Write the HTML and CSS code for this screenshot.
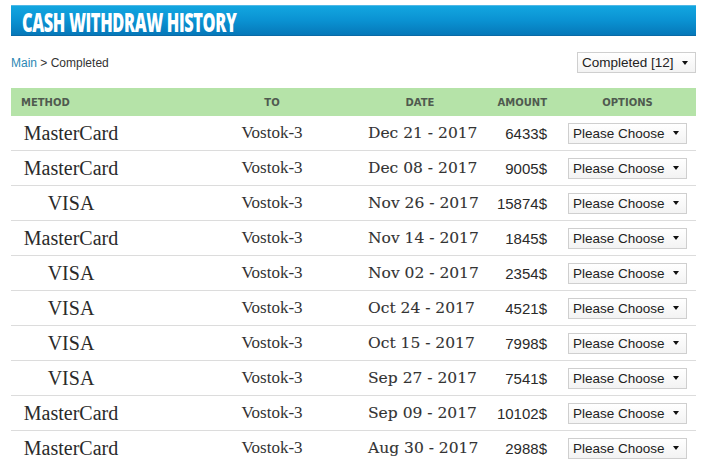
FILE: index.html
```html
<!DOCTYPE html>
<html>
<head>
<meta charset="utf-8">
<link rel="stylesheet" href="styles.css">
</head>
<body>
<div class="page">
  <div class="titlebar"><h1 class="title">CASH WITHDRAW HISTORY</h1></div>
  <div class="toolbar">
    <div class="crumbs"><a class="crumb-link">Main</a> &gt; Completed</div>
    <div class="select select-filter"><span>Completed [12]</span><i class="caret"></i></div>
  </div>
  <div class="table">
    <div class="row head">
      <div class="c-method">METHOD</div>
      <div class="c-to">TO</div>
      <div class="c-date">DATE</div>
      <div class="c-amount">AMOUNT</div>
      <div class="c-options"><span class="opt-label">OPTIONS</span></div>
    </div>
    <div class="row"><div class="c-method">MasterCard</div><div class="c-to">Vostok-3</div><div class="c-date">Dec 21 - 2017</div><div class="c-amount">6433$</div><div class="c-options"><div class="select"><span>Please Choose</span><i class="caret"></i></div></div></div>
    <div class="row"><div class="c-method">MasterCard</div><div class="c-to">Vostok-3</div><div class="c-date">Dec 08 - 2017</div><div class="c-amount">9005$</div><div class="c-options"><div class="select"><span>Please Choose</span><i class="caret"></i></div></div></div>
    <div class="row"><div class="c-method">VISA</div><div class="c-to">Vostok-3</div><div class="c-date">Nov 26 - 2017</div><div class="c-amount">15874$</div><div class="c-options"><div class="select"><span>Please Choose</span><i class="caret"></i></div></div></div>
    <div class="row"><div class="c-method">MasterCard</div><div class="c-to">Vostok-3</div><div class="c-date">Nov 14 - 2017</div><div class="c-amount">1845$</div><div class="c-options"><div class="select"><span>Please Choose</span><i class="caret"></i></div></div></div>
    <div class="row"><div class="c-method">VISA</div><div class="c-to">Vostok-3</div><div class="c-date">Nov 02 - 2017</div><div class="c-amount">2354$</div><div class="c-options"><div class="select"><span>Please Choose</span><i class="caret"></i></div></div></div>
    <div class="row"><div class="c-method">VISA</div><div class="c-to">Vostok-3</div><div class="c-date">Oct 24 - 2017</div><div class="c-amount">4521$</div><div class="c-options"><div class="select"><span>Please Choose</span><i class="caret"></i></div></div></div>
    <div class="row"><div class="c-method">VISA</div><div class="c-to">Vostok-3</div><div class="c-date">Oct 15 - 2017</div><div class="c-amount">7998$</div><div class="c-options"><div class="select"><span>Please Choose</span><i class="caret"></i></div></div></div>
    <div class="row"><div class="c-method">VISA</div><div class="c-to">Vostok-3</div><div class="c-date">Sep 27 - 2017</div><div class="c-amount">7541$</div><div class="c-options"><div class="select"><span>Please Choose</span><i class="caret"></i></div></div></div>
    <div class="row"><div class="c-method">MasterCard</div><div class="c-to">Vostok-3</div><div class="c-date">Sep 09 - 2017</div><div class="c-amount">10102$</div><div class="c-options"><div class="select"><span>Please Choose</span><i class="caret"></i></div></div></div>
    <div class="row"><div class="c-method">MasterCard</div><div class="c-to">Vostok-3</div><div class="c-date">Aug 30 - 2017</div><div class="c-amount">2988$</div><div class="c-options"><div class="select"><span>Please Choose</span><i class="caret"></i></div></div></div>
  </div>
</div>
</body>
</html>
```
FILE: styles.css
```css
html, body { margin: 0; padding: 0; background: #fff; }
body { font-family: "Liberation Sans", Arial, sans-serif; color: #333; }
.page { width: 685px; margin-left: 11px; padding-top: 5px; }

.titlebar {
  height: 31px;
  box-sizing: border-box;
  border-top: 1px solid #4fb8e6;
  background: linear-gradient(#12a6e0 0%, #0a92d2 50%, #0678b9 100%);
  border-bottom: 1px solid #0a6aa6;
  display: flex;
  align-items: center;
  padding-left: 11px;
}
.title {
  margin: 0;
  font-family: "Open Sans", sans-serif;
  font-weight: 800;
  font-size: 26px;
  letter-spacing: -0.6px;
  color: #fff;
  white-space: nowrap;
  transform: scaleX(0.63);
  transform-origin: left center;
  line-height: 30px;
  height: 30px;
  padding-top: 1px;
  box-sizing: border-box;
}

.toolbar {
  display: flex;
  justify-content: space-between;
  align-items: center;
  height: 21px;
  margin-top: 16px;
  margin-bottom: 15px;
}
.crumbs { font-size: 12px; color: #333; }
.crumb-link { color: #2b88b4; }

.select {
  box-sizing: border-box;
  height: 21px;
  width: 119px;
  border: 1px solid #cfcfcf;
  background: linear-gradient(#ffffff, #f3f3f3);
  display: flex;
  align-items: center;
  justify-content: space-between;
  padding: 0 7px 0 4px;
  font-family: "Liberation Sans", Arial, sans-serif;
  font-size: 13.5px;
  color: #222;
}
.select-filter { width: 119px; }
.caret {
  width: 0; height: 0;
  border-left: 3.5px solid transparent;
  border-right: 3.5px solid transparent;
  border-top: 4px solid #111;
}

.table { width: 685px; }
.row {
  display: grid;
  grid-template-columns: 165px 192px 104px 75px 1fr;
  align-items: center;
  height: 35px;
  box-sizing: border-box;
  border-bottom: 1px solid #dcdcdc;
}
.row.head {
  height: 28px;
  background: #b5e3a8;
  border-bottom: none;
  font-family: "DejaVu Sans", sans-serif;
  font-weight: bold;
  font-size: 10px;
  color: #4f5a4f;
}
.c-method {
  padding-right: 45px;
  text-align: center;
  font-family: "Liberation Serif", serif;
  font-size: 20px;
  color: #2a2a2a;
}
.head .c-method { text-align: left; padding-left: 10px; font-family: inherit; font-size: inherit; color: inherit; }
.c-to {
  text-align: center;
  font-family: "Liberation Serif", serif;
  font-size: 17px;
  color: #333;
}
.c-date {
  text-align: center;
  font-family: "DejaVu Serif", serif;
  font-size: 15.5px;
  color: #333;
  white-space: nowrap;
  -webkit-text-stroke: 0.12px #333;
}
.c-amount {
  text-align: right;
  font-size: 15px;
  color: #2a2a2a;
  white-space: nowrap;
}
.head .c-to, .head .c-date, .head .c-amount { font-family: inherit; font-size: inherit; color: inherit; -webkit-text-stroke: 0; }
.c-options { padding-left: 21px; }
.opt-label { display: block; width: 119px; text-align: center; }
```
